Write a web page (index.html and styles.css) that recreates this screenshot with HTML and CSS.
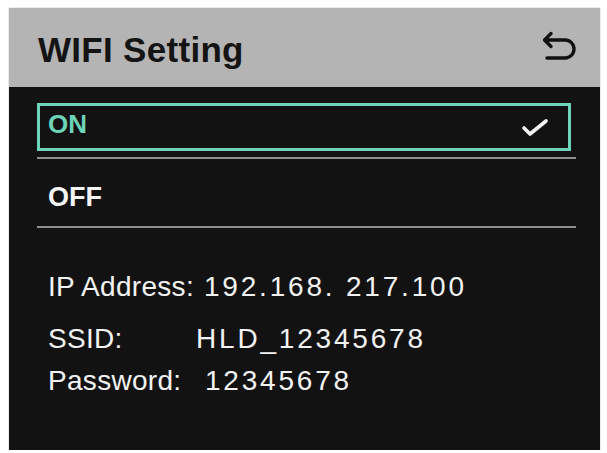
FILE: index.html
```html
<!DOCTYPE html>
<html>
<head>
<meta charset="utf-8">
<link rel="stylesheet" href="styles.css">
</head>
<body>
<div class="screen">
  <div class="header">
    <div class="title">WIFI Setting</div>
    <svg class="back" width="40" height="32" viewBox="0 0 40 32">
      <path d="M11 2.5 L4.5 9 L11 15.5 M4.5 9 H25 A9 9 0 0 1 25 27 H7" fill="none" stroke="#111" stroke-width="3.4" stroke-linecap="round" stroke-linejoin="round"/>
    </svg>
  </div>
  <div class="body">
    <div class="option selected">
      <span class="opt-label">ON</span>
      <svg class="check" width="28" height="20" viewBox="0 0 28 20">
        <path d="M3 11 L9 17 L25 4" fill="none" stroke="#f2f2f2" stroke-width="3.6" stroke-linecap="round" stroke-linejoin="round"/>
      </svg>
    </div>
    <div class="sep"></div>
    <div class="option plain">
      <span class="opt-label">OFF</span>
    </div>
    <div class="sep"></div>
    <div class="info">
      <div class="row row-ip"><span class="lbl lbl-ip">IP Address:</span><span class="val">192.168. 217.100</span></div>
      <div class="row row-ssid"><span class="lbl lbl-ssid">SSID:</span><span class="val">HLD_12345678</span></div>
      <div class="row row-pw"><span class="lbl lbl-pw">Password:</span><span class="val">12345678</span></div>
    </div>
  </div>
</div>
</body>
</html>
```
FILE: styles.css
```css
html, body {
  margin: 0;
  padding: 0;
  background: #ffffff;
}
body {
  font-family: "Liberation Sans", Arial, sans-serif;
}
.screen {
  margin: 8px 7px 0 9px;
  width: 591px;
  height: 442px;
  background: #121212;
  display: flex;
  flex-direction: column;
  box-shadow: 0 0 1px #888;
}
.header {
  height: 79px;
  box-sizing: border-box;
  background: #b4b4b4;
  display: flex;
  justify-content: space-between;
  align-items: flex-start;
  padding: 22px 20px 0 29px;
}
.title {
  font-size: 35px;
  line-height: 40px;
  font-weight: bold;
  color: #141414;
  letter-spacing: 0.3px;
}
.back {
  margin-top: 1px;
  display: block;
}
.body {
  padding: 16px 24px 0 28px;
  display: flex;
  flex-direction: column;
}
.option {
  display: flex;
  justify-content: space-between;
  color: #f4f4f4;
  font-weight: bold;
}
.selected {
  width: 534px;
  height: 48px;
  box-sizing: border-box;
  border: 3px solid #6ed4b7;
  padding: 0 19px 0 8px;
  color: #6ed4b7;
  align-items: center;
}
.selected .opt-label {
  font-size: 26px;
  line-height: 30px;
  align-self: flex-start;
  margin-top: 3px;
}
.check {
  display: block;
}
.sep {
  height: 2px;
  background: #8e8e8e;
  width: 539px;
}
.selected + .sep {
  margin-top: 6px;
}
.plain {
  padding: 23px 0 14px 11px;
}
.plain .opt-label {
  font-size: 27px;
  line-height: 30px;
}
.info {
  padding-left: 11px;
  padding-top: 43px;
  color: #f2f2f2;
  font-size: 28px;
}
.row {
  display: flex;
  line-height: 32px;
  white-space: pre;
}
.row-ssid {
  margin-top: 20px;
}
.row-pw {
  margin-top: 10px;
}
.lbl {
  letter-spacing: 0.3px;
}
.lbl-ip { width: 156px; }
.lbl-ssid { width: 148px; }
.lbl-pw { width: 157px; }
.val {
  letter-spacing: 2.8px;
}
```
